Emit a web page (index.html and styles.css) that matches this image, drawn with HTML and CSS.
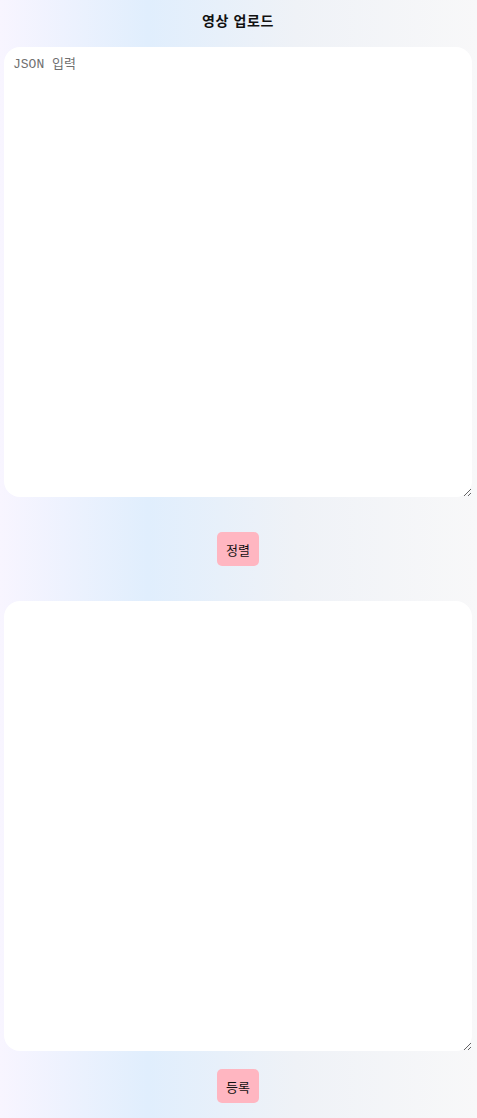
FILE: index.html
```html
<!DOCTYPE html>
<html lang="ko">
<head>
<meta charset="utf-8">
<title>영상 업로드</title>
<link rel="stylesheet" href="styles.css">
</head>
<body>
<main class="page">
  <h1 class="title">영상 업로드</h1>
  <textarea class="editor" placeholder="JSON 입력"></textarea>
  <button class="btn btn-sort" type="button">정렬</button>
  <textarea class="editor"></textarea>
  <button class="btn btn-submit" type="button">등록</button>
</main>
</body>
</html>
```

FILE: styles.css
```css
html, body {
  margin: 0;
  padding: 0;
}
body {
  min-height: 1118px;
  background: linear-gradient(to right, #f8f5ff 0%, #e0eefd 31%, #eff2f7 62%, #f8f8f9 100%);
  font-family: "Noto Sans CJK KR", "Noto Sans", sans-serif;
}
.page {
  display: flex;
  flex-direction: column;
  align-items: center;
  padding: 0 5px 15px 4px;
}
.title {
  margin: 0;
  height: 40px;
  line-height: 40px;
  font-size: 14px;
  font-weight: 700;
  letter-spacing: 0.6px;
  color: #111;
}
.editor {
  box-sizing: border-box;
  width: 100%;
  height: 450px;
  margin-top: 7px;
  border: none;
  border-radius: 16px;
  background: #fff;
  padding: 6px 9px;
  font-family: "Liberation Mono", "Noto Sans CJK KR", monospace;
  font-size: 13px;
  color: #222;
  outline: none;
  resize: vertical;
}
.editor::placeholder {
  color: #707070;
}
.editor + .btn {
  margin-top: 35px;
}
.btn-sort {
  margin-bottom: 28px;
}
.btn-submit {
  margin-top: 18px !important;
}
.btn {
  box-sizing: border-box;
  height: 34px;
  padding: 0 9px;
  border: none;
  border-radius: 5px;
  background: #ffb6c1;
  color: #111;
  font-family: "Noto Sans CJK KR", sans-serif;
  font-size: 13px;
  cursor: pointer;
}
```
